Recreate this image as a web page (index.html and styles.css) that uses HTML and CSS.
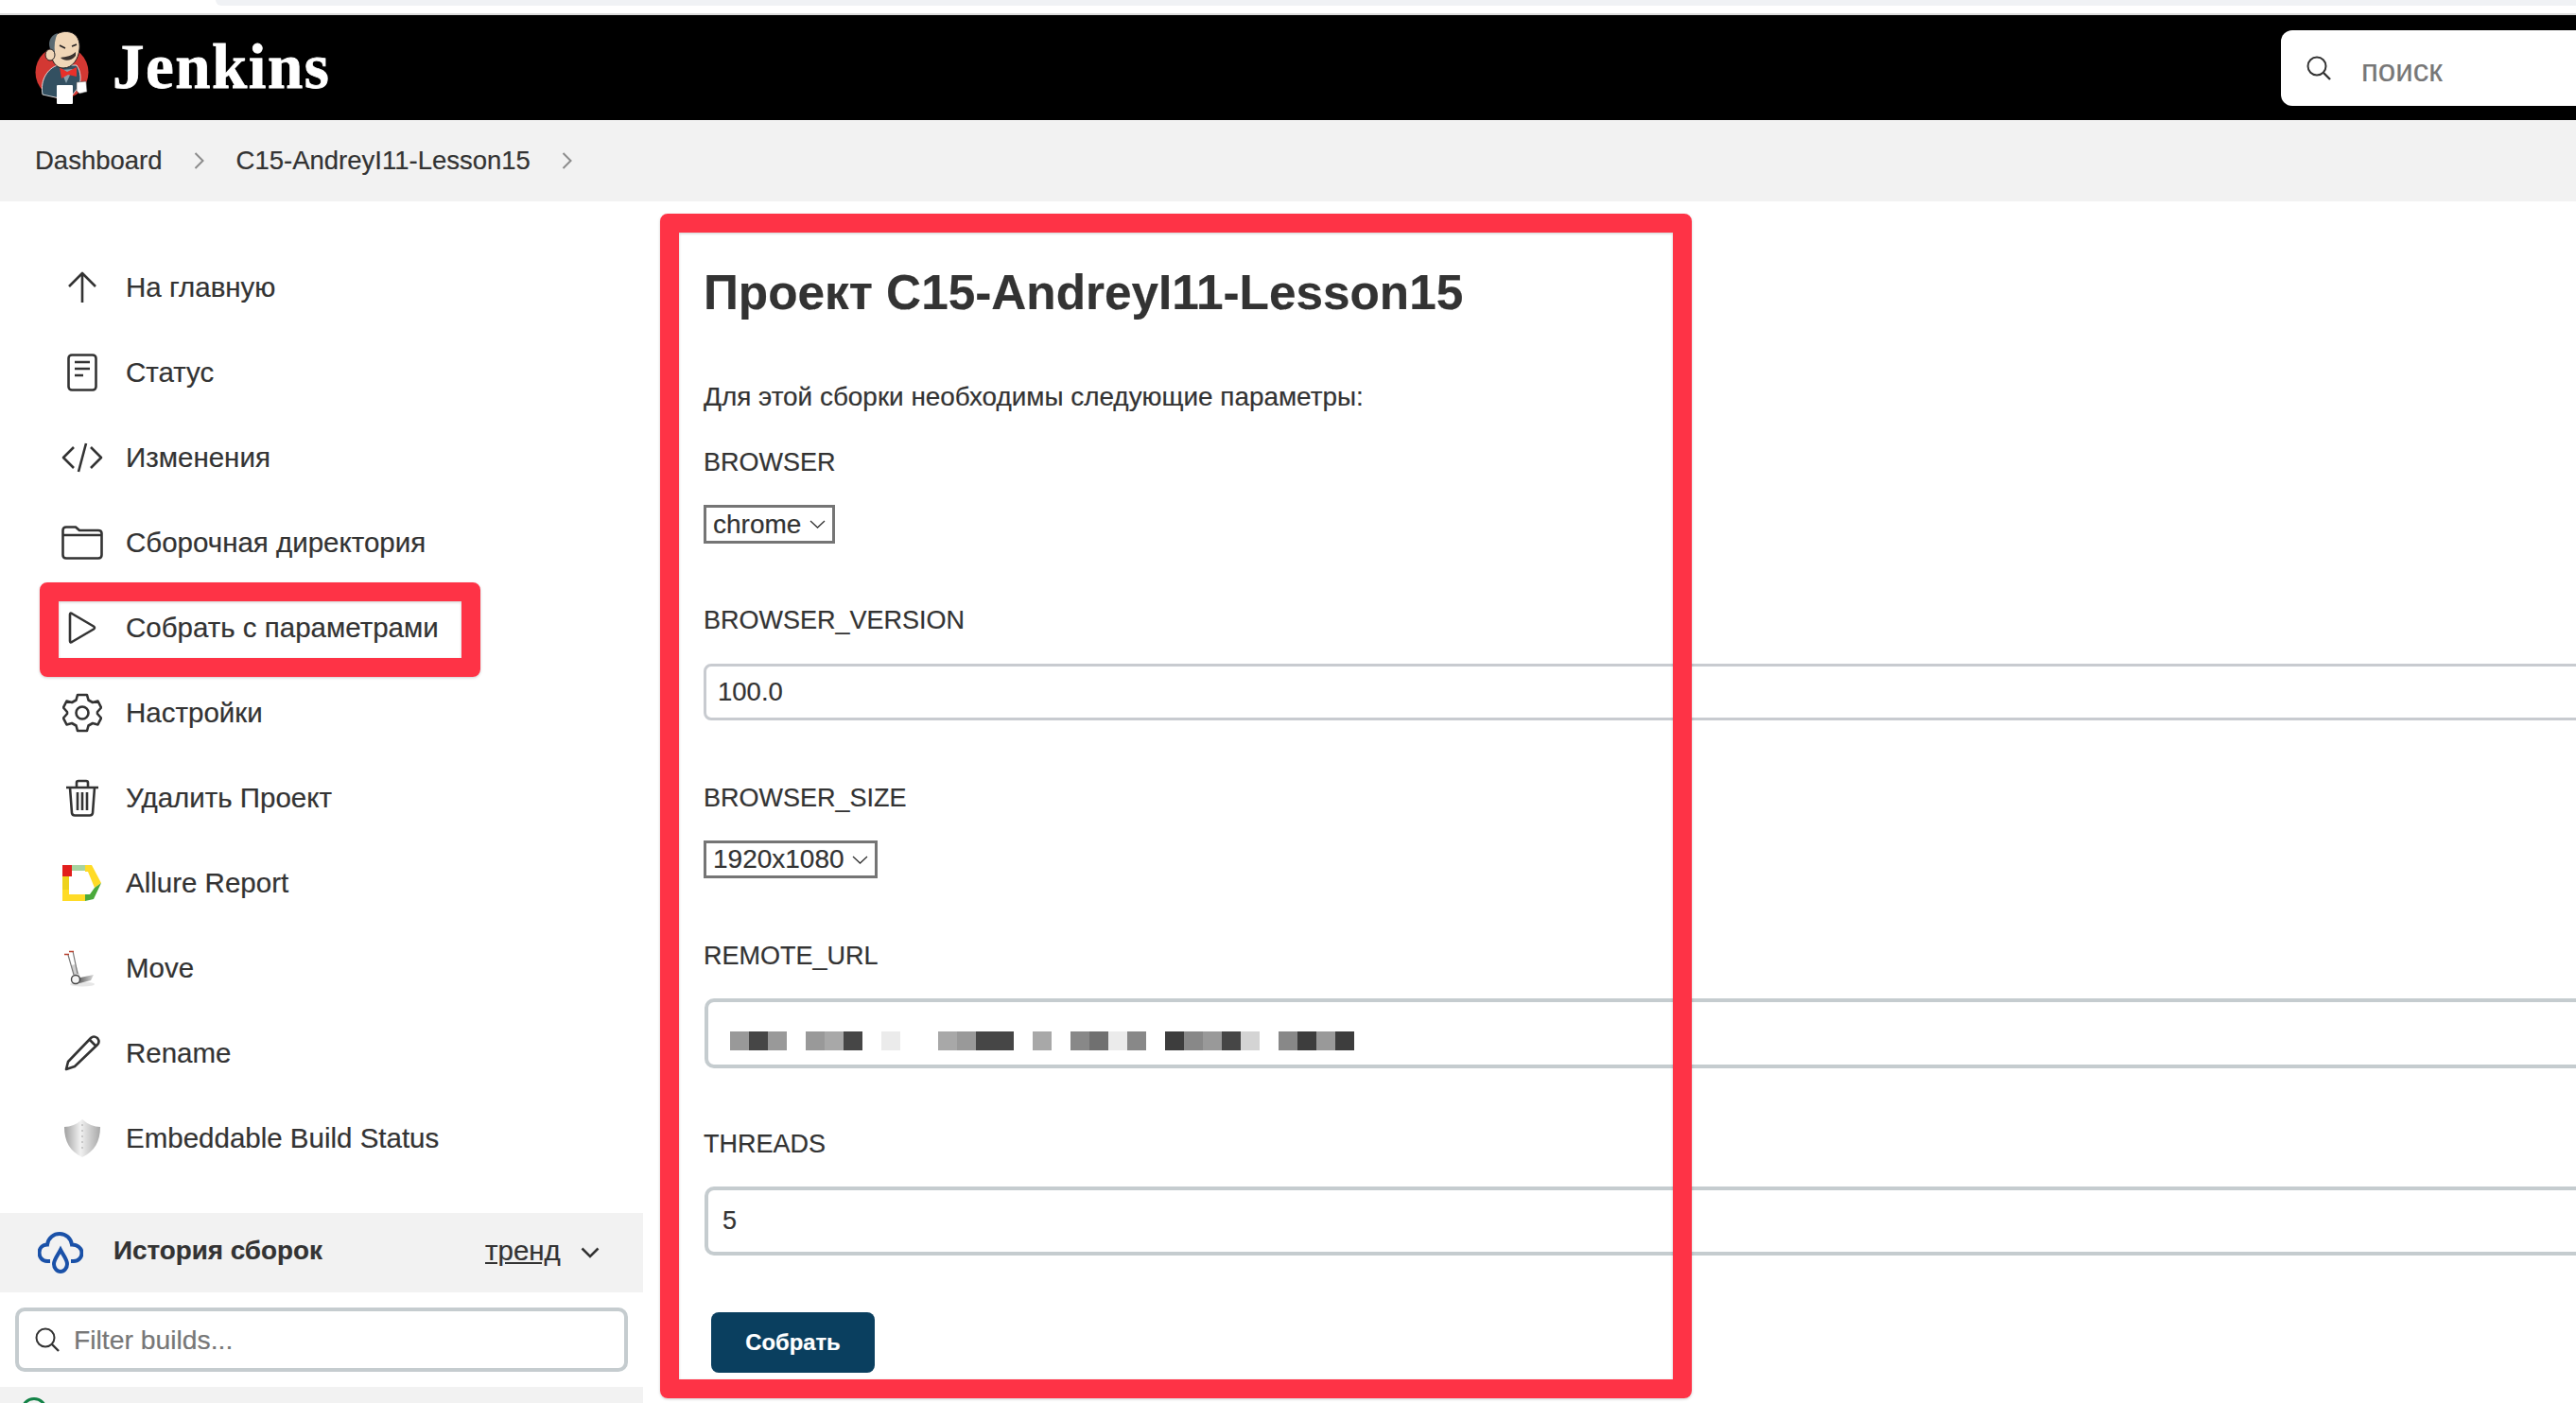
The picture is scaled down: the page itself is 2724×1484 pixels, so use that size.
FILE: index.html
```html
<!DOCTYPE html>
<html lang="ru">
<head>
<meta charset="utf-8">
<title>Jenkins</title>
<link rel="stylesheet" href="styles.css">
</head>
<body>
<div class="page">
  <div class="topstrip"><div class="topstrip-bar"></div></div>
  <header class="header">
    <a class="logo">
      <svg class="logo-img" viewBox="0 0 58 80" width="58" height="80">
        <circle cx="28.500" cy="44.500" r="28" fill="#d33833"/>
        <path d="M8 68 C5 52 14 40 24 37 L44 37 C49 44 49 54 46 60 L40 68 L26 72 Z" fill="#335061" stroke="#fff" stroke-width=".8"/>
        <path d="M27 42 L33 56 L40 41 Z" fill="#8aa0ac"/>
        <path d="M26 39 L34 44 L44 39 L44 49 L35 47 L28 51 Z" fill="#e8302a"/>
        <path d="M17 12 C20 3 30 0 37 2 C45 4 48 12 47 20 C46 30 40 40 30 40 C24 40 20 36 18 30 Z" fill="#f0d6b7" stroke="#231f20" stroke-width="1"/>
        <path d="M17 22 C13 14 15 6 24 3 C21 9 20 16 21 24 Z" fill="#5a6a72"/>
        <ellipse cx="16" cy="26" rx="5" ry="6" fill="#f0d6b7" stroke="#231f20"/>
        <path d="M26 16 L32 19 M39 17 L44 15" stroke="#231f20" stroke-width="1.600" fill="none"/>
        <path d="M27 29 C33 28 39 27 43 23 L43 27 C38 33 31 33 27 29 Z" fill="#3b3330"/>
        <rect x="23" y="58" width="17" height="20" rx="1" fill="#fff"/>
        <path d="M44 55 L54 54 L55 65 L47 67 L44 64 Z" fill="#fff" stroke="#555" stroke-width=".6"/>
      </svg>
      <span class="logo-text">Jenkins</span>
    </a>
    <div class="search">
      <svg class="search-icon" viewBox="0 0 26 26" width="26" height="26"><circle cx="11" cy="11" r="9.500" fill="none" stroke="#333" stroke-width="2"/><path d="M18 18 L25 25" stroke="#333" stroke-width="2.400" fill="none"/></svg>
      <span class="search-text">поиск</span>
    </div>
  </header>
  <nav class="crumbs">
    <span>Dashboard</span>
    <svg class="crumb-sep" viewBox="0 0 11 18" width="11" height="18"><path d="M1.500 1 L9.500 9 L1.500 17" fill="none" stroke="#8c8c8c" stroke-width="2"/></svg>
    <span>C15-AndreyI11-Lesson15</span>
    <svg class="crumb-sep" viewBox="0 0 11 18" width="11" height="18"><path d="M1.500 1 L9.500 9 L1.500 17" fill="none" stroke="#8c8c8c" stroke-width="2"/></svg>
  </nav>
  <div class="body">
    <aside class="side">
      <ul class="tasks">
        <li class="task"><span class="ico"><svg viewBox="0 0 40 40" width="40" height="40"><path d="M20 36 V6 M6 19 L20 5 L34 19" class="ln"/></svg></span>На главную</li>
        <li class="task"><span class="ico"><svg viewBox="0 0 40 40" width="40" height="40"><rect x="5.500" y="1.500" width="29" height="37" rx="3.500" class="ln"/><path d="M12 9 H28 M12 16 H28 M12 23 H21" class="ln"/></svg></span>Статус</li>
        <li class="task"><span class="ico"><svg viewBox="0 0 44 40" width="44" height="40"><path d="M13 9 L2 20 L13 31 M31 9 L42 20 L31 31 M26 5 L18 35" class="ln"/></svg></span>Изменения</li>
        <li class="task"><span class="ico"><svg viewBox="0 0 44 36" width="44" height="36"><path d="M1.500 9 V31 Q1.500 34.500 5 34.500 H39 Q42.500 34.500 42.500 31 V8 Q42.500 5 39 5 H19 L15 1.500 H5 Q1.500 1.500 1.500 5 Z M1.500 10 H42" class="ln"/></svg></span>Сборочная директория</li>
        <li class="task"><span class="ico"><svg viewBox="0 0 32 34" width="32" height="34"><path d="M3 3 Q3 1 5 2 L28 15.500 Q30 17 28 18.500 L5 32 Q3 33 3 31 Z" class="ln"/></svg></span>Собрать с параметрами</li>
        <li class="task"><span class="ico"><svg viewBox="0 0 42 42" width="42" height="42"><path d="M16 2 H26 L27.500 7.500 L32 10 L37.500 8.500 L41 15.500 L37 20 V22 L41 26.500 L37.500 33.500 L32 32 L27.500 34.500 L26 40 H16 L14.500 34.500 L10 32 L4.500 33.500 L1 26.500 L5 22 V20 L1 15.500 L4.500 8.500 L10 10 L14.500 7.500 Z" class="ln"/><circle cx="21" cy="21" r="6.500" class="ln"/></svg></span>Настройки</li>
        <li class="task"><span class="ico"><svg viewBox="0 0 36 40" width="36" height="40"><path d="M1 9 H35 M12 8 V4 Q12 2 14 2 H22 Q24 2 24 4 V8 M5 9 L7 36 Q7.500 38.500 10 38.500 H26 Q28.500 38.500 29 36 L31 9 M13 14 V33 M18 14 V33 M23 14 V33" class="ln"/></svg></span>Удалить Проект</li>
        <li class="task"><span class="ico"><svg viewBox="0 0 42 38" width="42" height="38"><path d="M0 0 H10 V12 H0 Z" fill="#e21e1c"/><path d="M10 0 H24 V6 H10 Z" fill="#a7d3a0"/><path d="M24 0 H31 L41 19 L34 24 L27 7 H24 Z" fill="#ffdb26"/><path d="M0 12 H7 V26 H0 Z" fill="#eed21d"/><path d="M0 26 H7 V31 H24 V38 H0 Z" fill="#ffdb26"/><path d="M34 24 L41 19 L33 36 L24 38 V31 L29 31 Z" fill="#4aa93b"/></svg></span>Allure Report</li>
        <li class="task"><span class="ico"><svg viewBox="0 0 40 40" width="40" height="40"><defs><linearGradient id="blade" x1="0" x2="1"><stop offset="0" stop-color="#666"/><stop offset="1" stop-color="#d8d8d8"/></linearGradient></defs><ellipse cx="20" cy="37" rx="13" ry="2.500" fill="#e6e6e6"/><path d="M8 17 L13 16 L18 30 L12 31 Z" fill="#cfcfcf"/><path d="M18 30 L32 27 L29 33 L17 36 Z" fill="url(#blade)"/><path d="M5 6 L11 27 M10 2 L15 26" fill="none" stroke="#777" stroke-width="1.200"/><path d="M1 5.500 H6 M6 2.500 H11" stroke="#b8412f" stroke-width="1.400"/><circle cx="13" cy="32" r="4.500" fill="#f4f4f4" stroke="#444" stroke-width="1.400"/></svg></span>Move</li>
        <li class="task"><span class="ico"><svg viewBox="0 0 40 40" width="40" height="40"><path d="M3 37 L5 29 L29 4 Q32 1 36 4 Q39 8 36 11 L12 34 Z M28 6 L35 13" class="ln"/></svg></span>Rename</li>
        <li class="task"><span class="ico"><svg viewBox="0 0 40 42" width="40" height="42"><defs><linearGradient id="shield" x1="0" x2="1"><stop offset="0" stop-color="#a0a0a0"/><stop offset=".45" stop-color="#f1f1f1"/><stop offset="1" stop-color="#a8a8a8"/></linearGradient></defs><path d="M20 1 Q29 9 39 9 C39 24 33 35 20 41 C7 35 1 24 1 9 Q11 9 20 1 Z" fill="url(#shield)"/><path d="M20 6 V36" stroke="#bdbdbd" stroke-width="1.500" stroke-dasharray="2 4"/></svg></span>Embeddable Build Status</li>
      </ul>
      <div class="history">
        <svg class="history-icon" viewBox="0 0 48 44" width="48" height="44"><path d="M13 31 H10 C4 31 1.500 26 1.500 22 C1.500 17 5 13.500 10 13.500 C11 6 17 2 23 2 C30 2 35 7 36 13.500 C42 13.500 46.500 17 46.500 22.500 C46.500 27 43 31 38 31 H35" fill="none" stroke="#1a51a8" stroke-width="4"/><path d="M24 19 C27 25 31 29 31 34 C31 38 28 42 24 42 C20 42 17 38 17 34 C17 29 21 25 24 19 Z" fill="none" stroke="#1a51a8" stroke-width="4"/></svg>
        <span class="history-title">История сборок</span>
        <span class="trend">тренд</span>
        <svg class="history-chev" viewBox="0 0 20 12" width="20" height="12"><path d="M1.500 1.500 L10 10 L18.500 1.500" fill="none" stroke="#333" stroke-width="2.500"/></svg>
      </div>
      <div class="filter">
        <svg class="filter-icon" viewBox="0 0 26 26" width="26" height="26"><circle cx="11" cy="11" r="9.500" fill="none" stroke="#333" stroke-width="2"/><path d="M18 18 L25 25" stroke="#333" stroke-width="2.400" fill="none"/></svg>
        <span class="filter-text">Filter builds...</span>
      </div>
      <div class="build-row"><svg class="build-ok" viewBox="0 0 28 28" width="28" height="28"><circle cx="14" cy="14" r="12.500" fill="none" stroke="#138347" stroke-width="3"/></svg></div>
    </aside>
    <main class="main">
      <h1 class="title">Проект C15-AndreyI11-Lesson15</h1>
      <p class="lead">Для этой сборки необходимы следующие параметры:</p>
      <div class="param">
        <div class="label">BROWSER</div>
        <div class="select select-browser"><span>chrome</span><svg class="select-chev" viewBox="0 0 17 9" width="17" height="9"><path d="M1 1 L8.500 8 L16 1" fill="none" stroke="#333" stroke-width="1.300"/></svg></div>
      </div>
      <div class="param param-version">
        <div class="label">BROWSER_VERSION</div>
        <div class="input input-thin">100.0</div>
      </div>
      <div class="param param-size">
        <div class="label">BROWSER_SIZE</div>
        <div class="select select-size"><span>1920x1080</span><svg class="select-chev" viewBox="0 0 17 9" width="17" height="9"><path d="M1 1 L8.500 8 L16 1" fill="none" stroke="#333" stroke-width="1.300"/></svg></div>
      </div>
      <div class="param param-url">
        <div class="label">REMOTE_URL</div>
        <div class="input input-url">
          <div class="mosaic" aria-hidden="true">
            <i class="m9"></i><i class="m4"></i><i class="m9"></i><i></i><i class="m9"></i><i class="ma"></i><i class="m4"></i><i></i><i class="me"></i><i></i><i></i><i class="ma"></i><i class="m9"></i><i class="m4"></i><i class="m4"></i><i></i><i class="ma"></i><i></i><i class="m8"></i><i class="m7"></i><i class="me"></i><i class="m8"></i><i></i><i class="m3"></i><i class="m8"></i><i class="m9"></i><i class="m4"></i><i class="md"></i><i></i><i class="m8"></i><i class="m3"></i><i class="m9"></i><i class="m3"></i>
          </div>
        </div>
      </div>
      <div class="param param-threads">
        <div class="label">THREADS</div>
        <div class="input input-threads">5</div>
      </div>
      <button class="submit">Собрать</button>
    </main>
  </div>
  <div class="mark mark-task"></div>
  <div class="mark mark-form"></div>
</div>
</body>
</html>
```
FILE: styles.css
```css
html, body { margin: 0; padding: 0; background: #fff; overflow: hidden; }
.page { position: relative; width: 2724px; height: 1484px; overflow: hidden; font-family: "Liberation Sans", Arial, sans-serif; font-size: 27px; color: #333; -webkit-text-stroke: .2px currentColor; }

.topstrip { height: 16px; box-sizing: border-box; background: #fff; border-bottom: 2px solid #dcdcdc; }
.topstrip-bar { height: 6px; margin-left: 228px; background: #f0f2f5; border-bottom-left-radius: 10px; }

.header { height: 111px; background: #000; display: flex; align-items: center; justify-content: space-between; }
.logo { display: flex; align-items: center; padding-left: 37px; }
.logo-img { display: block; }
.logo-text { margin-left: 24px; padding-bottom: 4px; font-family: "Liberation Serif", serif; font-weight: 700; font-size: 67px; line-height: 60px; color: #fff; letter-spacing: 1.500px; -webkit-text-stroke: .8px #fff; }
.search { width: 312px; height: 80px; background: #fff; border-radius: 12px 0 0 12px; display: flex; align-items: center; padding-left: 27px; box-sizing: border-box; }
.search-icon { display: block; }
.search-text { margin-left: 32px; color: #777; font-size: 33px; padding-top: 6px; }

.crumbs { height: 86px; background: #f2f2f2; display: flex; align-items: center; padding-left: 37px; box-sizing: border-box; gap: 33.500px; font-size: 27.500px; }
.crumb-sep { display: block; }

.body { display: flex; height: 1271px; }
.side { width: 680px; flex: none; padding-top: 46px; box-sizing: border-box; }
.tasks { list-style: none; margin: 0; padding: 0 0 34px 0; }
.task { height: 90px; display: flex; align-items: center; line-height: 36px; font-size: 29.500px; }
.ico { width: 133px; padding-left: 60px; padding-right: 19px; box-sizing: border-box; height: 54px; display: flex; align-items: center; justify-content: center; flex: none; }
.ico svg { display: block; flex: none; }
.ln { fill: none; stroke: #333; stroke-width: 2.600; stroke-linejoin: round; }

.history { height: 84px; background: #f2f2f2; display: flex; align-items: center; padding-left: 40px; box-sizing: border-box; }
.history-icon { display: block; flex: none; }
.history-title { margin-left: 32px; font-weight: 700; font-size: 27.800px; width: 393px; flex: none; padding-bottom: 4px; }
.trend { text-decoration: underline; font-size: 29.500px; width: 101px; flex: none; padding-bottom: 4px; }
.history-chev { display: block; }

.filter { margin: 16px 16px 0 16px; height: 68px; border: 4px solid #c5cccf; border-radius: 10px; box-sizing: border-box; display: flex; align-items: center; padding-left: 17px; }
.filter-icon { display: block; flex: none; }
.filter-text { margin-left: 15px; color: #777; font-size: 28.300px; }
.build-row { margin-top: 16px; height: 60px; background: #f2f2f2; padding: 11px 0 0 22px; box-sizing: border-box; }
.build-ok { display: block; }

.main { flex: 1; padding: 67px 0 0 64px; box-sizing: border-box; min-width: 0; }
.title { margin: 0; font-size: 51.300px; line-height: 60px; font-weight: 700; color: #333; }
.lead { margin: 62px 0 0 0; line-height: 36px; font-size: 27.900px; }
.param { margin-top: 33px; }
.param-version { margin-top: 63px; }
.param-size { margin-top: 64px; }
.param-url { margin-top: 64px; }
.param-threads { margin-top: 62px; }
.label { line-height: 36px; }

.select { margin-top: 27px; display: flex; align-items: center; box-sizing: border-box; border: 3px solid #757575; padding: 0 7px; background: #fff; color: #333; font-size: 28px; }
.select-browser { width: 139px; height: 41px; }
.select-size { width: 184px; height: 40px; }
.select-chev { margin-left: auto; display: block; }

.input { margin-top: 28px; width: calc(100% + 20px); box-sizing: border-box; display: flex; align-items: center; background: #fff; }
.input-thin { height: 60px; border: 3px solid #c8cbd0; border-radius: 8px; padding-left: 12px; font-size: 27.500px; }
.input-url { height: 74px; border: 4px solid #c5cccf; border-radius: 10px; padding-left: 23px; margin: 27px 0 0 1px; }
.input-threads { height: 73px; border: 4px solid #c5cccf; border-radius: 10px; padding-left: 15px; margin: 27px 0 0 1px; }

.mosaic { display: grid; grid-template-columns: repeat(33, 20px); height: 20px; margin-top: 16px; }
.mosaic i { display: block; height: 20px; }
.m3 { background: #3d3d3d; }
.m4 { background: #464646; }
.m7 { background: #707070; }
.m8 { background: #888; }
.m9 { background: #999; }
.ma { background: #a8a8a8; }
.md { background: #d4d4d4; }
.me { background: #ebebeb; }

.submit { display: block; margin: 60px 0 0 8px; width: 173px; height: 64px; border: 0; border-radius: 8px; background: #0a3f5f; color: #fff; font-family: inherit; font-size: 23.800px; font-weight: 700; padding: 0; }

.mark { position: absolute; box-sizing: border-box; border: 20px solid #fe3346; border-radius: 8px; box-shadow: 0 1px 3px rgba(0,0,0,.2), inset 0 1px 3px rgba(0,0,0,.2); }
.mark-task { left: 42px; top: 616px; width: 466px; height: 100px; }
.mark-form { left: 698px; top: 226px; width: 1091px; height: 1253px; }
```
